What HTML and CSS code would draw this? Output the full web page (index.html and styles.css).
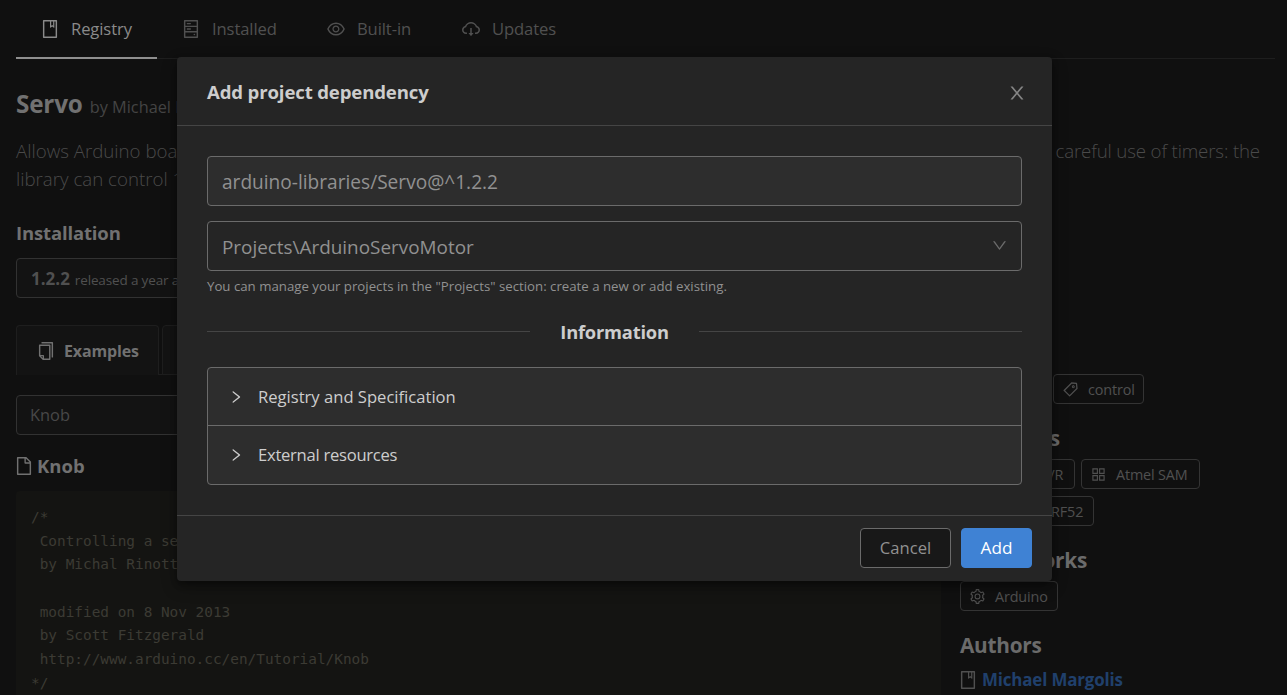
FILE: index.html
```html
<!DOCTYPE html>
<html lang="en">
<head>
<meta charset="utf-8">
<title>Library registry</title>
<link rel="stylesheet" href="styles.css">
</head>
<body>
<svg class="sprite" aria-hidden="true">
  <symbol id="book" viewBox="64 64 896 896"><path fill-rule="evenodd" d="M832 64H192c-17.700 0-32 14.300-32 32v832c0 17.700 14.300 32 32 32h640c17.700 0 32-14.300 32-32V96c0-17.700-14.300-32-32-32zM668 136v209.900L621.500 312 572 347.400V136zM792 888H232V136h280v296.900c0 3.300 1 6.600 3 9.300a15.900 15.900 0 0022.300 3.700l83.800-59.900 81.400 59.400c2.700 2 6 3.100 9.400 3.100 8.800 0 16-7.200 16-16V136h64z"/></symbol>
  <symbol id="hdd" viewBox="64 64 896 896"><path fill-rule="evenodd" d="M832 64H192c-17.700 0-32 14.300-32 32v832c0 17.700 14.300 32 32 32h640c17.700 0 32-14.300 32-32V96c0-17.700-14.300-32-32-32zM232 136h560v208H232zM232 408h560v208H232zM232 680h560v208H232zM312 208h184c4.400 0 8 3.600 8 8v48c0 4.400-3.600 8-8 8H312c-4.400 0-8-3.600-8-8v-48c0-4.400 3.600-8 8-8zM312 480h184c4.400 0 8 3.600 8 8v48c0 4.400-3.600 8-8 8H312c-4.400 0-8-3.600-8-8v-48c0-4.400 3.600-8 8-8z"/><circle cx="680" cy="784" r="40"/></symbol>
  <symbol id="eye" viewBox="64 64 896 896"><path d="M942.200 486.200C847.400 286.500 704.100 186 512 186c-192.200 0-335.400 100.500-430.200 300.300a60.300 60.300 0 000 51.500C176.600 737.500 319.900 838 512 838c192.200 0 335.400-100.500 430.200-300.300 7.700-16.200 7.700-35 0-51.500zM512 766c-161.300 0-279.400-81.800-362.700-254C232.600 339.800 350.700 258 512 258c161.300 0 279.400 81.800 362.700 254C791.500 684.200 673.400 766 512 766zm-4-430c-97.200 0-176 78.800-176 176s78.800 176 176 176 176-78.800 176-176-78.800-176-176-176zm0 288c-61.900 0-112-50.100-112-112s50.100-112 112-112 112 50.100 112 112-50.100 112-112 112z"/></symbol>
  <symbol id="cloud" viewBox="64 64 896 896"><path d="M624 706.300h-74.100V464c0-4.400-3.600-8-8-8h-60c-4.400 0-8 3.600-8 8v242.300H400c-6.700 0-10.400 7.700-6.300 12.900l112 141.700a8 8 0 0012.600 0l112-141.700c4.100-5.200.4-12.900-6.300-12.900z"/><path d="M811.400 366.700C765.600 245.900 648.900 160 512.200 160S258.800 245.800 213 366.600C127.300 389.100 64 467.200 64 560c0 110.500 89.500 200 199.900 200H304c4.400 0 8-3.600 8-8v-60c0-4.400-3.600-8-8-8h-40.100c-33.700 0-65.400-13.400-89-37.700-23.500-24.200-36-56.800-34.900-90.600.9-26.400 9.900-51.200 26.200-72.100 16.700-21.300 40.100-36.800 66.100-43.700l37.900-9.900 13.900-36.600c8.600-22.800 20.600-44.100 35.700-63.400a245.600 245.600 0 0152.400-49.900c41.100-28.900 89.500-44.200 140-44.200s98.900 15.300 140 44.200c19.900 14 37.500 30.800 52.400 49.900 15.100 19.300 27.100 40.700 35.700 63.400l13.800 36.500 37.800 10C846.100 454.500 884 503.800 884 560c0 33.100-12.900 64.300-36.300 87.700a123.070 123.070 0 01-87.600 36.300H720c-4.400 0-8 3.600-8 8v60c0 4.400 3.600 8 8 8h40.100C870.500 760 960 670.500 960 560c0-92.700-63.100-170.700-148.600-193.300z"/></symbol>
  <symbol id="copy" viewBox="64 64 896 896"><path fill-rule="evenodd" d="M832 64H296c-4.400 0-8 3.600-8 8v56c0 4.400 3.600 8 8 8h496v688c0 4.400 3.600 8 8 8h56c4.400 0 8-3.600 8-8V96c0-17.700-14.300-32-32-32zM704 192H192c-17.700 0-32 14.300-32 32v530.700c0 8.500 3.400 16.600 9.400 22.600l173.300 173.300c2.200 2.200 4.700 4 7.400 5.500v1.900h4.200c3.500 1.300 7.200 2 11 2H704c17.700 0 32-14.300 32-32V224c0-17.700-14.300-32-32-32zM350 856.200L263.900 770H350v86.200zM664 888H414V746c0-22.100-17.900-40-40-40H232V264h432v624z"/></symbol>
  <symbol id="file" viewBox="64 64 896 896"><path fill-rule="evenodd" d="M854.600 288.600L639.400 73.400c-6-6-14.100-9.400-22.600-9.400H192c-17.700 0-32 14.300-32 32v832c0 17.700 14.300 32 32 32h640c17.700 0 32-14.300 32-32V311.300c0-8.500-3.400-16.700-9.400-22.700zM790.200 326H602V137.800L790.200 326zm1.800 562H232V136h302v216a42 42 0 0042 42h216v494z"/></symbol>
  <symbol id="tag" viewBox="64 64 896 896"><path d="M938 458.800l-29.600-312.600c-1.500-16.200-14.400-29-30.600-30.600L565.200 86h-.4c-3.200 0-5.700 1-7.600 2.900L88.900 557.200a9.960 9.960 0 000 14.100l363.800 363.800c1.900 1.900 4.400 2.900 7.100 2.900s5.200-1 7.100-2.900l468.300-468.300c2-2.100 3-5 2.800-8zM459.700 834.700L189.300 564.300 589 164.600 836 188l23.400 247-399.700 399.700zM680 256c-48.500 0-88 39.500-88 88s39.500 88 88 88 88-39.500 88-88-39.500-88-88-88zm0 120c-17.700 0-32-14.300-32-32s14.300-32 32-32 32 14.300 32 32-14.300 32-32 32z"/></symbol>
  <symbol id="grid" viewBox="64 64 896 896"><path fill="none" stroke="currentColor" stroke-width="68" d="M178 178h268v268H178zM578 178h268v268H578zM178 578h268v268H178zM578 578h268v268H578z"/></symbol>
  <symbol id="gear" viewBox="64 64 896 896"><path fill-rule="evenodd" d="M924.800 625.700l-65.500-56c3.100-19 4.700-38.400 4.700-57.800s-1.600-38.800-4.700-57.800l65.500-56a32.030 32.030 0 009.300-35.200l-.9-2.600a443.740 443.740 0 00-79.700-137.900l-1.800-2.100a32.120 32.120 0 00-35.100-9.500l-81.300 28.900c-30-24.600-63.500-44-99.700-57.600l-15.700-85a32.050 32.050 0 00-25.800-25.700l-2.700-.5c-52.100-9.400-106.900-9.400-159 0l-2.700.5a32.050 32.050 0 00-25.800 25.700l-15.800 85.400a351.860 351.860 0 00-99 57.400l-81.900-29.100a32 32 0 00-35.100 9.500l-1.800 2.100a446.020 446.020 0 00-79.700 137.900l-.9 2.600c-4.500 12.500-.8 26.500 9.300 35.200l66.300 56.600c-3.100 18.800-4.600 38-4.600 57.100 0 19.200 1.500 38.400 4.600 57.100L99 625.500a32.030 32.030 0 00-9.300 35.200l.9 2.600c18.100 50.400 44.900 96.900 79.700 137.900l1.800 2.100a32.120 32.120 0 0035.100 9.500l81.900-29.100c29.800 24.500 63.100 43.900 99 57.400l15.800 85.400a32.050 32.050 0 0025.800 25.700l2.700.5a449.400 449.400 0 00159 0l2.700-.5a32.050 32.050 0 0025.800-25.700l15.700-85a350 350 0 0099.700-57.600l81.300 28.900a32 32 0 0035.100-9.500l1.800-2.100c34.800-41.100 61.600-87.500 79.700-137.900l.9-2.600c4.500-12.300.8-26.300-9.300-35zM788.300 465.900c2.500 15.100 3.800 30.600 3.800 46.100s-1.300 31-3.800 46.100l-6.600 40.100 74.700 63.900a370.030 370.030 0 01-42.600 73.600L721 702.800l-31.400 25.800c-23.900 19.600-50.500 35-79.300 45.800l-38.100 14.300-17.900 97a377.500 377.500 0 01-85 0l-17.900-97.200-37.800-14.500c-28.500-10.800-55-26.200-78.700-45.700l-31.400-25.900-93.400 33.200c-17-22.900-31.200-47.600-42.600-73.600l75.500-64.500-6.500-40c-2.400-14.900-3.700-30.300-3.700-45.500 0-15.300 1.200-30.600 3.700-45.500l6.500-40-75.500-64.500c11.300-26.100 25.600-50.700 42.600-73.600l93.400 33.200 31.400-25.900c23.700-19.500 50.200-34.900 78.700-45.700l37.900-14.300 17.900-97.200c28.100-3.200 56.800-3.200 85 0l17.900 97 38.100 14.300c28.700 10.800 55.400 26.200 79.300 45.800l31.400 25.800 92.800-32.900c17 22.900 31.200 47.600 42.600 73.600L781.800 426l6.500 39.900z"/><circle cx="512" cy="510" r="144" fill="none" stroke="currentColor" stroke-width="64"/></symbol>
  <symbol id="close" viewBox="64 64 896 896"><path d="M563.800 512l262.500-312.900c4.400-5.200.7-13.100-6.100-13.100h-79.800c-4.700 0-9.200 2.100-12.300 5.700L511.600 449.800 295.100 191.700c-3-3.600-7.500-5.700-12.300-5.700H203c-6.800 0-10.500 7.900-6.100 13.100L459.400 512 196.900 824.900A7.950 7.950 0 00203 838h79.800c4.700 0 9.200-2.100 12.300-5.700l216.500-258.100 216.500 258.100c3 3.600 7.500 5.700 12.300 5.700h79.800c6.800 0 10.500-7.900 6.100-13.100L563.800 512z"/></symbol>
  <symbol id="down" viewBox="64 64 896 896"><path d="M884 256h-75c-5.100 0-9.900 2.500-12.900 6.600L512 654.200 227.900 262.600c-3-4.100-7.800-6.600-12.900-6.600h-75c-6.500 0-10.300 7.400-6.500 12.700l352.600 486.100c12.800 17.600 39 17.600 51.700 0l352.600-486.100c3.900-5.300.1-12.700-6.400-12.700z"/></symbol>
  <symbol id="right" viewBox="64 64 896 896"><path d="M765.700 486.800L314.900 134.700A7.970 7.970 0 00302 141v77.300c0 4.900 2.300 9.600 6.100 12.600l360 281.100-360 281.100c-3.900 3-6.100 7.700-6.100 12.600V883c0 6.700 7.700 10.400 12.900 6.300l450.800-352.100a31.960 31.960 0 000-50.400z"/></symbol>
</svg>

<div class="page">
  <nav class="nav">
    <a class="nav-item nav-registry active"><svg class="icon"><use href="#book"/></svg><span>Registry</span></a>
    <a class="nav-item nav-installed"><svg class="icon"><use href="#hdd"/></svg><span>Installed</span></a>
    <a class="nav-item nav-builtin"><svg class="icon"><use href="#eye"/></svg><span>Built-in</span></a>
    <a class="nav-item nav-updates"><svg class="icon"><use href="#cloud"/></svg><span>Updates</span></a>
  </nav>
  <h1 class="title">Servo <small>by Michael Margolis</small></h1>
  <div class="description">
    <div class="line"><span>Allows Arduino boards to control a variety of servo motors. It makes</span><span class="line-end">careful use of timers: the</span></div>
    <div class="line"><span>library can control 12</span></div>
  </div>
  <div class="columns">
    <main class="main">
      <h2 class="section">Installation</h2>
      <div class="select"><b>1.2.2</b><small>released a year ago</small></div>
      <div class="tabs">
        <div class="tab tab-active"><svg class="icon"><use href="#copy"/></svg>Examples</div>
        <div class="tab"></div>
      </div>
      <div class="select select-example">Knob</div>
      <h3 class="file"><svg class="icon"><use href="#file"/></svg>Knob</h3>
      <pre class="code">/*
 Controlling a servo
 by Michal Rinott

 modified on 8 Nov 2013
 by Scott Fitzgerald
 http://www.arduino.cc/en/Tutorial/Knob
*/</pre>
    </main>
    <aside class="side">
      <h2>Tags</h2>
      <div class="chips"><span class="chip chip-device"><svg><use href="#tag"/></svg>device</span><span class="chip chip-control"><svg><use href="#tag"/></svg>control</span></div>
      <h2>Platforms</h2>
      <div class="chips"><span class="chip chip-avr"><svg><use href="#grid"/></svg>Atmel AVR</span><span class="chip chip-sam"><svg><use href="#grid"/></svg>Atmel SAM</span><span class="chip chip-nrf"><svg><use href="#grid"/></svg>Nordic nRF52</span></div>
      <h2>Frameworks</h2>
      <div class="chips"><span class="chip chip-arduino"><svg><use href="#gear"/></svg>Arduino</span></div>
      <h2>Authors</h2>
      <div class="author"><svg class="icon"><use href="#book"/></svg><a>Michael Margolis</a></div>
    </aside>
  </div>
</div>

<div class="modal" role="dialog">
  <header class="modal-head"><span>Add project dependency</span><svg class="close"><use href="#close"/></svg></header>
  <div class="modal-body">
    <div class="field filled">arduino-libraries/Servo@^1.2.2</div>
    <div class="field project"><span>Projects\ArduinoServoMotor</span><svg class="down"><use href="#down"/></svg></div>
    <p class="hint">You can manage your projects in the "Projects" section: create a new or add existing.</p>
    <div class="divider"><span>Information</span></div>
    <div class="collapse">
      <div class="panel"><svg><use href="#right"/></svg><span class="label-registry">Registry and Specification</span></div>
      <div class="panel"><svg><use href="#right"/></svg><span class="label-external">External resources</span></div>
    </div>
  </div>
  <footer class="modal-foot"><button class="btn cancel">Cancel</button><button class="btn add">Add</button></footer>
</div>
</body>
</html>
```
FILE: styles.css
```css
* { box-sizing: border-box; }
html, body { height: 100%; }
body {
  margin: 0;
  overflow: hidden;
  background: #101010;
  color: #505050;
  font: 17px/28px "Open Sans", "Noto Sans", sans-serif;
}
svg { fill: currentColor; color: inherit; flex: none; }
h1, h2, h3, p, pre { margin: 0; }
.sprite { display: none; }
.icon { width: 18px; height: 18px; }

.page { height: 695px; padding: 0 12px 0 16px; overflow: hidden; }

/* top navigation */
.nav { display: flex; height: 59px; box-shadow: inset 0 -1px #1e1e1e; }
.nav-item { display: flex; align-items: center; gap: 12px; padding: 0 0 1px 25px; font-size: 16.600px; letter-spacing: -.1px; white-space: nowrap; }
.nav-item span { padding-bottom: 1px; }
.nav-registry { width: 141px; }
.nav-installed { width: 145px; }
.nav-builtin { width: 135px; }
.nav-item.active { color: #8a8a8a; box-shadow: inset 0 -2px #8f8f8f; }

/* library header */
.title { margin-top: 30px; height: 31px; color: #717171; font-size: 24.300px; font-weight: 700; letter-spacing: -.2px; line-height: 30px; white-space: nowrap; }
.title small { margin-left: 1px; color: #444; font-size: 16.300px; font-weight: 400; letter-spacing: 0; }
.description { margin-top: 17px; width: 1244px; color: #4a4a4a; font-size: 18.700px; font-weight: 300; }
.line { display: flex; justify-content: space-between; height: 28px; white-space: nowrap; }
.line-end { letter-spacing: -.15px; }

.columns { display: grid; grid-template-columns: 925px 1fr; column-gap: 19px; }
.main { padding-top: 25px; }
.section, .file { color: #717171; font-size: 18.500px; font-weight: 700; letter-spacing: -.15px; line-height: 30px; }
.select { display: flex; align-items: center; gap: 5px; margin-top: 10px; height: 40px; padding-left: 14px; border: 1px solid #323232; border-radius: 4px; background: #131313; }
.select b { font-size: 17px; padding-top: 1px; }
.select small { padding-top: 3px; font-size: 13.500px; letter-spacing: -.15px; }
.tabs { display: flex; gap: 3px; margin-top: 27px; height: 50px; box-shadow: inset 0 -1px #1e1e1e; }
.tab { width: 200px; border: 1px solid #1e1e1e; border-radius: 4px 4px 0 0; background: #131313; }
.tab-active { display: flex; align-items: center; gap: 9px; width: 143px; padding-left: 20px; border-bottom: 0; color: #717171; font-size: 16px; font-weight: 700; letter-spacing: -.15px; }
.select-example { margin-top: 20px; padding-left: 13px; font-size: 16.400px; color: #484848; }
.file { display: flex; align-items: center; gap: 4px; margin-top: 16px; margin-left: -1px; letter-spacing: 0; }
.code { margin-top: 10px; height: 220px; padding: 15px 15px; border-radius: 4px; background: #141412; color: #3c3b34; font: 14.400px/23.670px "DejaVu Sans Mono", monospace; }

.side { padding-top: 145px; }
.side h2 { color: #6b6b6b; font-size: 20.800px; font-weight: 700; letter-spacing: -.25px; line-height: 30px; }
.chips { display: flex; flex-wrap: wrap; gap: 7px 6px; margin: 6px 0 19px; }
.chip { display: flex; align-items: center; gap: 10px; height: 30px; padding: 1px 0 0 9px; border: 1px solid #343434; border-radius: 4px; font-size: 14.400px; letter-spacing: -.15px; white-space: nowrap; }
.chip svg { width: 15px; height: 15px; margin-top: -1px; }
.chip-device { width: 87px; }
.chip-control { width: 91px; }
.chip-avr { width: 115px; }
.chip-sam { width: 119px; }
.chip-nrf { width: 134px; }
.chip-arduino { width: 98px; }
.author { display: flex; align-items: center; gap: 5px; margin-top: 5px; margin-left: -1px; height: 30px; font-size: 16.900px; font-weight: 700; letter-spacing: -.15px; }
.author a { color: #20406c; }

/* dialog lies over the page */
.modal { position: absolute; left: 177px; top: 57px; width: 875px; border-radius: 4px; background: #252525; box-shadow: 0 6px 16px rgba(0, 0, 0, .32), 0 3px 6px rgba(0, 0, 0, .3); overflow: visible; }
.modal-head { display: flex; align-items: center; justify-content: space-between; height: 69px; padding: 2px 26px 0 30px; border-bottom: 1px solid #454545; color: #cdcdcd; font-size: 18.600px; font-weight: 700; letter-spacing: -.15px; }
.close { width: 18px; height: 18px; margin-top: 2px; color: #858585; }
.modal-body { padding: 30px; }
.field { display: flex; align-items: center; justify-content: space-between; height: 50px; padding: 2px 14px 0; border: 1px solid #6b6b6b; border-radius: 4px; color: #919191; font-size: 19.100px; }
.filled { background: #2d2d2d; }
.project { margin-top: 15px; font-size: 18.900px; }
.down { width: 15px; height: 15px; margin-top: -4px; color: #6b6b6b; }
.hint { margin-top: 5px; color: #919191; font-size: 13.240px; line-height: 20px; }
.divider { display: flex; align-items: center; gap: 30px; height: 30px; margin-top: 21px; color: #cdcdcd; font-size: 18.300px; font-weight: 700; letter-spacing: -.2px; }
.divider::before, .divider::after { content: ""; flex: 1; height: 1px; margin-top: -1px; background: #454545; }
.collapse { height: 118px; margin-top: 20px; border: 1px solid #6b6b6b; border-radius: 4px; background: #2d2d2d; color: #cdcdcd; }
.panel { display: flex; align-items: center; gap: 15px; height: 57px; padding-left: 21px; font-size: 16.600px; }
.panel + .panel { height: 59px; padding-bottom: 1px; border-top: 1px solid #6b6b6b; }
.panel svg { width: 14px; height: 14px; }
.label-registry { padding-top: 1px; }
.label-external { padding-top: 1px; letter-spacing: -.26px; }
.modal-foot { display: flex; justify-content: flex-end; gap: 10px; height: 66px; padding: 12px 20px; border-top: 1px solid #454545; }
.btn { height: 40px; padding: 0; border: 1px solid #6b6b6b; border-radius: 4px; background: #181818; color: #919191; font: inherit; font-size: 16.600px; }
.cancel { width: 91px; }
.add { width: 71px; border-color: #3f82d4; background: #3f82d4; color: #fff; font-size: 17.200px; }
```
